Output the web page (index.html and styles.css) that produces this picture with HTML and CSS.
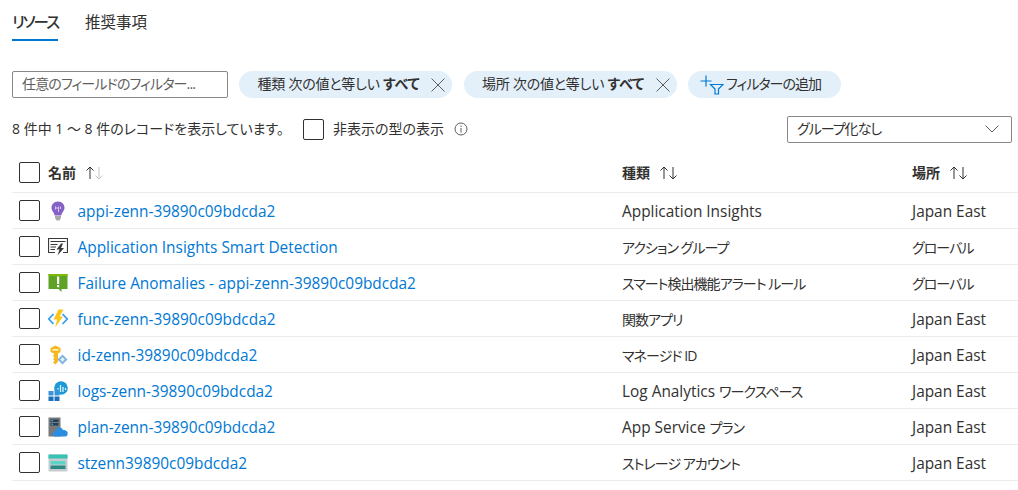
FILE: index.html
```html
<!DOCTYPE html>
<html lang="ja">
<head>
  <meta charset="UTF-8">
  <title>リソース</title>
  <link rel="stylesheet" href="styles.css">
</head>
<body>
  <!-- タブ -->
  <div class="tabs">
    <span class="tab active">リソース</span>
    <span class="tab">推奨事項</span>
  </div>

  <!-- フィルター -->
  <div class="filters">
    <div class="search">任意のフィールドのフィルター...</div>
    <div class="pill">
      <span class="pill-text">種類 次の値と等しい <b>すべて</b></span>
      <svg class="close" viewBox="0 0 14 14"><path d="M0.5 0.5L13.5 13.5M13.5 0.5L0.5 13.5"/></svg>
    </div>
    <div class="pill">
      <span class="pill-text">場所 次の値と等しい <b>すべて</b></span>
      <svg class="close" viewBox="0 0 14 14"><path d="M0.5 0.5L13.5 13.5M13.5 0.5L0.5 13.5"/></svg>
    </div>
    <div class="pill add">
      <svg class="add-icon" viewBox="0 0 24 20">
        <path class="plus" d="M6 0.500V11.500M0.500 6H11.500"/>
        <path class="funnel" d="M10.500 9.500H23L18.500 14V19H15V14Z"/>
      </svg>
      <span class="add-text">フィルターの追加</span>
    </div>
  </div>

  <div class="summary">
    <span class="count">8 件中 1 ～ 8 件のレコードを表示しています。</span>
    <span class="box"></span>
    <span class="hidden-label">非表示の型の表示</span>
    <svg class="info" viewBox="0 0 14 14"><circle cx="7" cy="7" r="6"/><path d="M7 6V10.500M7 3.500V5"/></svg>
    <div class="group-select">
      <span class="group-text">グループ化なし</span>
      <svg class="chev" viewBox="0 0 14 8"><path d="M0.500 0.500L7 7L13.500 0.500"/></svg>
    </div>
  </div>

  <!-- 一覧 -->
  <div class="list">
    <div class="row head">
      <span class="box"></span>
      <span class="head-cell first"><span class="head-text">名前</span><svg class="sort" viewBox="0 0 20 13"><path d="M5 13V1M1.500 4.500L5 1L8.500 4.500"/><path class="faded" d="M14 1V13M10.500 9.500L14 13L17.500 9.500"/></svg></span>
      <span class="head-cell"><span class="head-text">種類</span><svg class="sort" viewBox="0 0 20 13"><path d="M5 13V1M1.500 4.500L5 1L8.500 4.500"/><path d="M14 1V13M10.500 9.500L14 13L17.500 9.500"/></svg></span>
      <span class="head-cell"><span class="head-text">場所</span><svg class="sort" viewBox="0 0 20 13"><path d="M5 13V1M1.500 4.500L5 1L8.500 4.500"/><path d="M14 1V13M10.500 9.500L14 13L17.500 9.500"/></svg></span>
    </div>

    <div class="row">
      <span class="box"></span>
      <span class="name-cell">
        <svg class="icon" viewBox="0 0 20 20">
          <path d="M10 0.500C5.800 0.500 3.500 3.700 3.500 6.800C3.500 9.800 6 11 6.700 14.500H13.300C14 11 16.500 9.800 16.500 6.800C16.500 3.700 14.200 0.500 10 0.500Z" fill="#8661c5"/>
          <path d="M7.500 5.500V8.500M7.500 7H10.500M10.500 5.500V11M12.500 5.500V8" stroke="#d9c8f2" fill="none"/>
          <path d="M7 15H13V17L11.500 19.500H8.500L7 17Z" fill="#a9a9ad"/>
        </svg>
        <a class="lat">appi-zenn-39890c09bdcda2</a>
      </span>
      <span class="lat">Application Insights</span>
      <span class="lat">Japan East</span>
    </div>

    <div class="row">
      <span class="box"></span>
      <span class="name-cell">
        <svg class="icon" viewBox="0 0 20 20">
          <path d="M7 15.500H0.500V1.500H19.500V15.500H15" fill="none" stroke="#3b3a39" stroke-width="1.200"/>
          <path d="M2.500 4.500H17.500M2.500 7.500H9.500M2.500 10H8M2.500 12.500H7" stroke="#3b3a39"/>
          <path d="M13 6.500L8.500 12.500H11.500L9.500 18.500L16 11H13L15 6.500Z" fill="#3b3a39"/>
        </svg>
        <a class="lat">Application Insights Smart Detection</a>
      </span>
      <span class="ja">アクション グループ</span>
      <span class="ja">グローバル</span>
    </div>

    <div class="row">
      <span class="box"></span>
      <span class="name-cell">
        <svg class="icon" viewBox="0 0 20 20">
          <path d="M0.500 1H19.500V16H13.500V19L10.500 16H0.500Z" fill="#5ea226"/>
          <path d="M0.500 1H19.500V3H0.500Z" fill="#7fba00"/>
          <rect x="9" y="3.500" width="2.200" height="7.500" fill="#fff"/>
          <rect x="9" y="12" width="2.200" height="2.200" fill="#fff"/>
        </svg>
        <a class="lat">Failure Anomalies - appi-zenn-39890c09bdcda2</a>
      </span>
      <span class="ja">スマート検出機能アラート ルール</span>
      <span class="ja">グローバル</span>
    </div>

    <div class="row">
      <span class="box"></span>
      <span class="name-cell">
        <svg class="icon" viewBox="0 0 20 20">
          <path d="M5.500 5L0.800 10L5.500 15" fill="none" stroke="#3aa0f0" stroke-width="1.800"/>
          <path d="M14.500 5L19.200 10L14.500 15" fill="none" stroke="#3aa0f0" stroke-width="1.800"/>
          <path d="M10.500 0.500H15.500L11.500 7.500H15L7 18.500L9.200 10.500H5.500Z" fill="#fcc419"/>
        </svg>
        <a class="lat">func-zenn-39890c09bdcda2</a>
      </span>
      <span class="ja">関数アプリ</span>
      <span class="lat">Japan East</span>
    </div>

    <div class="row">
      <span class="box"></span>
      <span class="name-cell">
        <svg class="icon" viewBox="0 0 20 20">
          <path d="M7.500 0.500L12.500 3V7L10 8.500V16.500L7.500 19.500L5 17.500L6.500 15.500L5 14L6.500 12.500L5 11L6 9.500V8.500L2.500 7V3Z" fill="#f5b81f"/>
          <rect x="4.500" y="4" width="6" height="1.600" fill="#fff3c4"/>
          <path d="M14.500 9.500L19.500 14.500L14.500 19.500L9.500 14.500Z" fill="#7fb5e0"/>
          <path d="M14.500 12.300L16.700 14.500L14.500 16.700L12.300 14.500Z" fill="#e6f2fb"/>
        </svg>
        <a class="lat">id-zenn-39890c09bdcda2</a>
      </span>
      <span class="ja">マネージド ID</span>
      <span class="lat">Japan East</span>
    </div>

    <div class="row">
      <span class="box"></span>
      <span class="name-cell">
        <svg class="icon" viewBox="0 0 20 20">
          <circle cx="13" cy="7" r="6.800" fill="#1b9ad6"/>
          <path d="M10 11V7M12.500 11V4M15 11V6M17.500 9V7" stroke="#d9f0fb" stroke-width="1.300"/>
          <rect x="0.500" y="10" width="5" height="4.500" fill="#3a93d8"/>
          <rect x="6.500" y="8.500" width="5" height="6" fill="#3a93d8"/>
          <rect x="0.500" y="15.500" width="5" height="4.500" fill="#1c6fb8"/>
          <rect x="6.500" y="15.500" width="5" height="4.500" fill="#1c6fb8"/>
        </svg>
        <a class="lat">logs-zenn-39890c09bdcda2</a>
      </span>
      <span class="lat">Log Analytics <span class="ja">ワークスペース</span></span>
      <span class="lat">Japan East</span>
    </div>

    <div class="row">
      <span class="box"></span>
      <span class="name-cell">
        <svg class="icon" viewBox="0 0 20 20">
          <rect x="0.500" y="0.500" width="12" height="19" fill="#7a7a7a"/>
          <rect x="2.500" y="2.500" width="8" height="2.500" fill="#1f3f5f"/>
          <rect x="2.500" y="6" width="8" height="2.500" fill="#1f3f5f"/>
          <rect x="3.500" y="3.200" width="1.500" height="1" fill="#5fd0e8"/>
          <rect x="3.500" y="6.700" width="1.500" height="1" fill="#5fd0e8"/>
          <path d="M7 19.500C3.500 19.500 3.500 15 7 14.500C7.500 10 13.500 9 15 13C18 12.500 20.500 15 19.500 17.500C19.500 19 18 19.500 17 19.500Z" fill="#2b8de0"/>
        </svg>
        <a class="lat">plan-zenn-39890c09bdcda2</a>
      </span>
      <span class="lat">App Service <span class="ja">プラン</span></span>
      <span class="lat">Japan East</span>
    </div>

    <div class="row">
      <span class="box"></span>
      <span class="name-cell">
        <svg class="icon" viewBox="0 0 20 20">
          <rect x="0.500" y="1.500" width="19" height="17" rx="1" fill="#c8ccd0"/>
          <rect x="0.500" y="1.500" width="19" height="4" fill="#37c2b1"/>
          <rect x="2.500" y="8" width="15" height="3.500" fill="#5ed4c6"/>
          <rect x="2.500" y="12.500" width="15" height="3.500" fill="#2b8a84"/>
        </svg>
        <a class="lat">stzenn39890c09bdcda2</a>
      </span>
      <span class="ja">ストレージ アカウント</span>
      <span class="lat">Japan East</span>
    </div>
  </div>
</body>
</html>
```

FILE: styles.css
```css
* { margin: 0; padding: 0; box-sizing: border-box; }
html, body { height: 100%; overflow: hidden; }
body {
  background-color: #fff;
  color: #323130;
  font-family: "Open Sans", "Noto Sans CJK JP", sans-serif;
  font-size: 14px;
  font-feature-settings: "palt";
  white-space: nowrap;
}

/* タブ */
.tabs {
  display: flex;
  gap: 27px;
  height: 41px;
  padding: 10px 0 0 12px;
}
.tab {
  font-size: 15.500px;
  height: 31px;
}
.tab.active {
  width: 46px;
  font-weight: 500;
  letter-spacing: -1.900px;
  border-bottom: 2px solid #0078d4;
}

/* フィルター */
.filters {
  display: flex;
  align-items: center;
  gap: 11.500px;
  height: 27px;
  margin-top: 30px;
  padding-left: 12px;
}
.search {
  width: 215.600px;
  height: 27px;
  padding: 1px 9px;
  border: 1px solid #8a8886;
  border-radius: 2px;
  color: #605e5c;
  letter-spacing: -0.850px;
}
.pill {
  display: flex;
  align-items: center;
  justify-content: space-between;
  width: 213px;
  height: 27px;
  padding: 0 7px 0 18.500px;
  background-color: #e3f0fa;
  border-radius: 14px;
}
.pill-text {
  padding-bottom: 3px;
  letter-spacing: -0.250px;
}
.pill b { font-weight: 700; }
.close {
  width: 14px;
  height: 14px;
  fill: none;
  stroke: #605e5c;
  stroke-width: 1;
}
.pill.add {
  width: 153px;
  padding: 0 0 0 12px;
  gap: 2px;
  justify-content: flex-start;
}
.add-text {
  padding-bottom: 3px;
  letter-spacing: -1px;
}
.add-icon { width: 24px; height: 20px; fill: none; }
.plus { stroke: #0078d4; stroke-width: 1.200; }
.funnel { stroke: #0078d4; stroke-width: 1.200; }

/* 件数 */
.summary {
  display: flex;
  align-items: center;
  height: 28px;
  margin-top: 17px;
  padding-left: 12px;
}
.count {
  width: 291px;
  padding-bottom: 3px;
}
.hidden-label {
  width: 112px;
  margin-left: 9px;
  padding-bottom: 3px;
}
.info {
  width: 14px;
  height: 14px;
  margin-left: 9px;
  fill: none;
  stroke: #605e5c;
  stroke-width: 1;
}
.group-select {
  display: flex;
  align-items: center;
  justify-content: space-between;
  width: 225px;
  height: 27px;
  margin-left: auto;
  margin-right: 6px;
  padding: 0 12px 0 9px;
  border: 1px solid #8a8886;
  border-radius: 2px;
}
.group-text {
  padding-bottom: 2px;
  letter-spacing: -1px;
}
.chev {
  width: 14px;
  height: 8px;
  fill: none;
  stroke: #605e5c;
  stroke-width: 1;
}
.box {
  display: block;
  flex: none;
  width: 21px;
  height: 21px;
  border: 1px solid #323130;
  border-radius: 2px;
}

/* 一覧 */
.list { margin: 10px 0 0 12px; }
.row {
  display: grid;
  grid-template-columns: 29px 574px 290px 1fr;
  align-items: center;
  height: 36px;
  padding-left: 7px;
  font-size: 15.400px;
  border-bottom: 1px solid #edebe9;
}
.row.head { height: 40px; font-size: 14px; }
.head-cell {
  display: flex;
  align-items: center;
  font-weight: 700;
}
.head-text { padding-bottom: 2px; }
.name-cell {
  display: flex;
  align-items: center;
  gap: 9.500px;
}
.row a { color: #0078d4; }
.lat { padding-top: 1px; }
.ja {
  font-size: 14px;
  letter-spacing: -0.950px;
}
.icon { width: 20px; height: 20px; flex: none; }
.sort {
  width: 20px;
  height: 13px;
  margin-left: 9px;
  fill: none;
  stroke: #323130;
  stroke-width: 1;
}
.faded { stroke: #c8c6c4; }
```
